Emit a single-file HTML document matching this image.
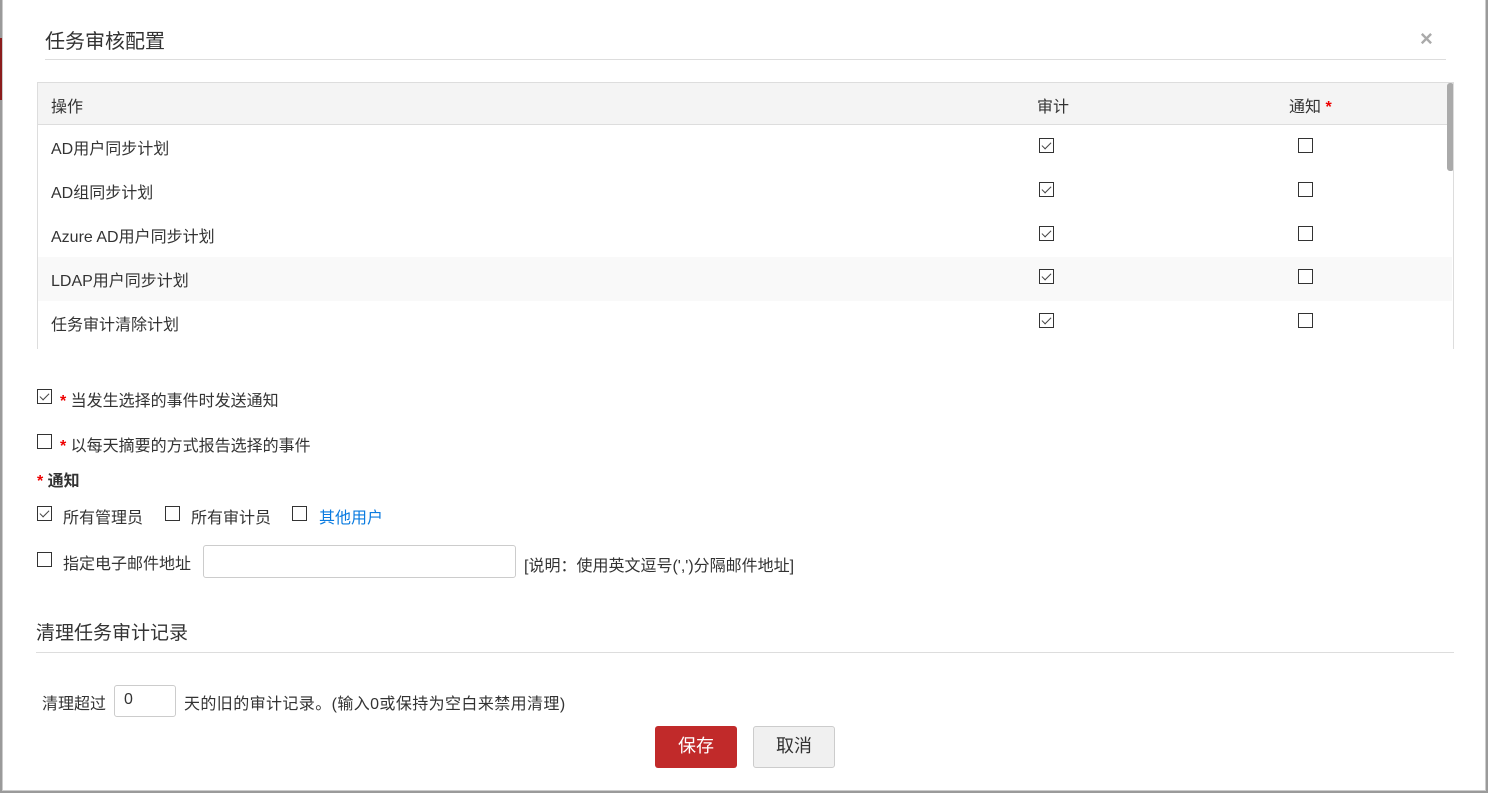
<!DOCTYPE html>
<html><head><meta charset="utf-8"><style>
*{box-sizing:border-box;margin:0;padding:0}
body{width:1488px;height:793px;background:#9a9a9a;font-family:"Liberation Sans","Noto Sans CJK SC",sans-serif;color:#333;font-size:16px;position:relative;overflow:hidden}
.modal{position:absolute;left:2px;top:-1px;width:1484px;height:792px;background:#fff;border:1px solid #ccc}
.a{position:absolute;white-space:nowrap}
.cb{position:absolute;width:15px;height:15px;border:1px solid #333;background:#fff}
.cb.c::after{content:"";position:absolute;left:4px;top:1px;width:4px;height:8px;border:solid #444;border-width:0 1px 1px 0;transform:rotate(45deg)}
.row{position:absolute;left:0;width:1414px;height:44px}
.st{color:#e00;font-weight:bold}
</style></head><body>
<div class="a" style="left:0;top:38px;width:3px;height:62px;background:#8b1c1c"></div>
<div class="modal">
<div class="a" style="left:42px;top:25px;font-size:20px;color:#333">任务审核配置</div>
<div class="a" style="left:1417px;top:26px;font-size:22px;color:#aaa;font-weight:bold">×</div>
<div class="a" style="left:42px;top:59px;width:1401px;height:1px;background:#ddd"></div>
<div class="a" style="left:34px;top:82px;width:1417px;height:267px;border:1px solid #ddd;border-bottom:none;overflow:hidden">
 <div class="row" style="top:0;height:42px;background:#f4f4f4;border-bottom:1px solid #ddd"></div>
 <div class="a" style="left:13px;top:10px">操作</div>
 <div class="a" style="left:999px;top:10px">审计</div>
 <div class="a" style="left:1251px;top:10px">通知 <span class="st">*</span></div>
 <div class="row" style="top:174px;background:#f9f9f9"></div>
 <div class="a" style="left:13px;top:52px">AD用户同步计划</div>
 <div class="a" style="left:13px;top:96px">AD组同步计划</div>
 <div class="a" style="left:13px;top:140px">Azure AD用户同步计划</div>
 <div class="a" style="left:13px;top:184px">LDAP用户同步计划</div>
 <div class="a" style="left:13px;top:228px">任务审计清除计划</div>
 <div class="cb c" style="left:1001px;top:55px"></div><div class="cb" style="left:1260px;top:55px"></div>
 <div class="cb c" style="left:1001px;top:99px"></div><div class="cb" style="left:1260px;top:99px"></div>
 <div class="cb c" style="left:1001px;top:143px"></div><div class="cb" style="left:1260px;top:143px"></div>
 <div class="cb c" style="left:1001px;top:186px"></div><div class="cb" style="left:1260px;top:186px"></div>
 <div class="cb c" style="left:1001px;top:230px"></div><div class="cb" style="left:1260px;top:230px"></div>
 <div class="a" style="left:1409px;top:0;width:7px;height:88px;background:#aaa;border-radius:3px"></div>
 <div class="a" style="left:1415px;top:0;width:1px;height:267px;background:#ddd"></div>
</div>
<div class="cb c" style="left:34px;top:389px"></div>
<div class="a" style="left:57px;top:387px"><span class="st">*</span> 当发生选择的事件时发送通知</div>
<div class="cb" style="left:34px;top:434px"></div>
<div class="a" style="left:57px;top:432px"><span class="st">*</span> 以每天摘要的方式报告选择的事件</div>
<div class="a" style="left:34px;top:467px;font-weight:bold"><span class="st">*</span> 通知</div>
<div class="cb c" style="left:34px;top:506px"></div><div class="a" style="left:60px;top:504px">所有管理员</div>
<div class="cb" style="left:162px;top:506px"></div><div class="a" style="left:188px;top:504px">所有审计员</div>
<div class="cb" style="left:289px;top:506px"></div><div class="a" style="left:316px;top:504px;color:#0a7be0">其他用户</div>
<div class="cb" style="left:34px;top:552px"></div><div class="a" style="left:60px;top:550px">指定电子邮件地址</div>
<div class="a" style="left:200px;top:545px;width:313px;height:33px;border:1px solid #ccc;border-radius:3px"></div>
<div class="a" style="left:521px;top:552px">[说明：使用英文逗号(',')分隔邮件地址]</div>
<div class="a" style="left:33px;top:618px;font-size:19px">清理任务审计记录</div>
<div class="a" style="left:33px;top:652px;width:1418px;height:1px;background:#ddd"></div>
<div class="a" style="left:39px;top:690px">清理超过</div>
<div class="a" style="left:111px;top:685px;width:62px;height:32px;border:1px solid #ccc;border-radius:3px;padding:5px 0 0 9px">0</div>
<div class="a" style="left:181px;top:690px;letter-spacing:0.4px">天的旧的审计记录。(输入0或保持为空白来禁用清理)</div>
<div class="a" style="left:652px;top:726px;width:82px;height:42px;background:#c12a2a;border-radius:3px;color:#fff;font-size:18px;text-align:center;line-height:41px">保存</div>
<div class="a" style="left:750px;top:726px;width:82px;height:42px;background:#f0f0f0;border:1px solid #ccc;border-radius:3px;font-size:18px;text-align:center;line-height:39px">取消</div>
</div>
</body></html>
